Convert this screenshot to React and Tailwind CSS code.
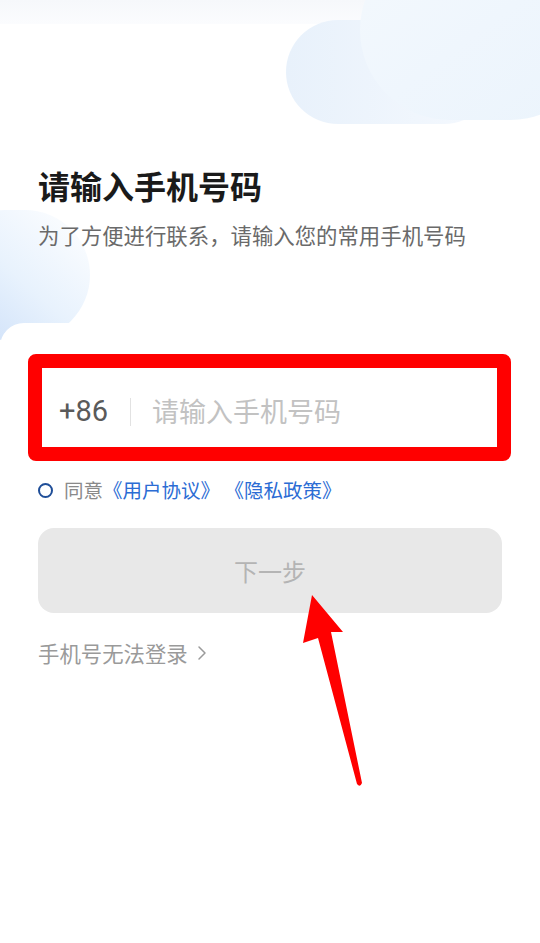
import { ChevronRight } from "lucide-react";

export default function App() {
  return (
    <div
      className="relative w-full h-[943px] overflow-hidden bg-white"
      style={{ fontFamily: '"Noto Sans CJK SC", "Noto Sans", sans-serif' }}
    >
      {/* background decoration */}
      <div className="absolute inset-x-0 top-0 h-[24px] bg-gradient-to-b from-[#f6f8fb] to-[#fbfcfe]" />
      <div className="absolute left-[286px] top-[20px] w-[210px] h-[104px] rounded-full bg-gradient-to-r from-[#e8f1fb] to-[#f5f9fe]" />
      <div className="absolute left-[360px] top-[-60px] w-[240px] h-[180px] rounded-full bg-gradient-to-br from-[#f4f9fd] via-[#eff6fd] to-[#ebf4fc]" />
      <div className="absolute left-[-60px] top-[210px] w-[150px] h-[130px] rounded-full bg-gradient-to-tr from-[#c8dcf8] via-[#e8f2fd] to-[#ffffff]" />

      {/* header */}
      <div className="relative pt-[164px] px-[38px]">
        <h1 className="text-[32px] leading-[42px] font-bold text-[#1a1a1a]">请输入手机号码</h1>
        <p className="mt-[14px] text-[21.4px] leading-[30px] text-[#6a6a6a]">
          为了方便进行联系，请输入您的常用手机号码
        </p>
      </div>

      {/* card */}
      <div className="relative mt-[73px] bg-white rounded-tl-[24px] pt-[31px]">
        <div className="mx-[28px] w-[483px] border-[14px] border-[#ff0000] rounded-[8px] bg-white">
          <div className="h-[79px] flex items-center pl-[17px] pt-[8px]">
            <span className="text-[29px] text-[#5a5a5a]" style={{ fontFamily: "Roboto, sans-serif" }}>+86</span>
            <span className="ml-[22px] w-px h-[28px] bg-[#e2e2e2]" />
            <span className="ml-[21px] text-[27px] text-[#c2c2c2]">请输入手机号码</span>
          </div>
        </div>

        <div className="mt-[15px] px-[38px] flex items-center h-[28px]">
          <span className="w-[15px] h-[15px] rounded-full border-2 border-[#1f4e98]" />
          <span className="ml-[11px] text-[19.5px] text-[#8a8a8a]">同意</span>
          <span className="text-[19.5px] text-[#2b6cd4] whitespace-pre">《用户协议》 《隐私政策》</span>
        </div>

        <div className="mt-[24px] mx-[38px] h-[85px] rounded-[16px] bg-[#e8e8e8] flex items-center justify-center">
          <span className="text-[24px] text-[#b4b4b4]">下一步</span>
        </div>

        <div className="mt-[25px] px-[38px] flex items-center h-[30px]">
          <span className="text-[21.4px] text-[#9a9a9a]">手机号无法登录</span>
          <ChevronRight className="ml-[2px] w-[24px] h-[24px] text-[#9a9a9a]" strokeWidth={1.5} />
        </div>
      </div>

      {/* annotation arrow */}
      <svg className="absolute left-0 top-0" width="540" height="943" viewBox="0 0 540 943">
        <path
          d="M312 595 L343 632 L331 632 L362 783 Q360 788 357 784 L318 638 L303 643 Z"
          fill="#ff0000"
        />
      </svg>
    </div>
  );
}
